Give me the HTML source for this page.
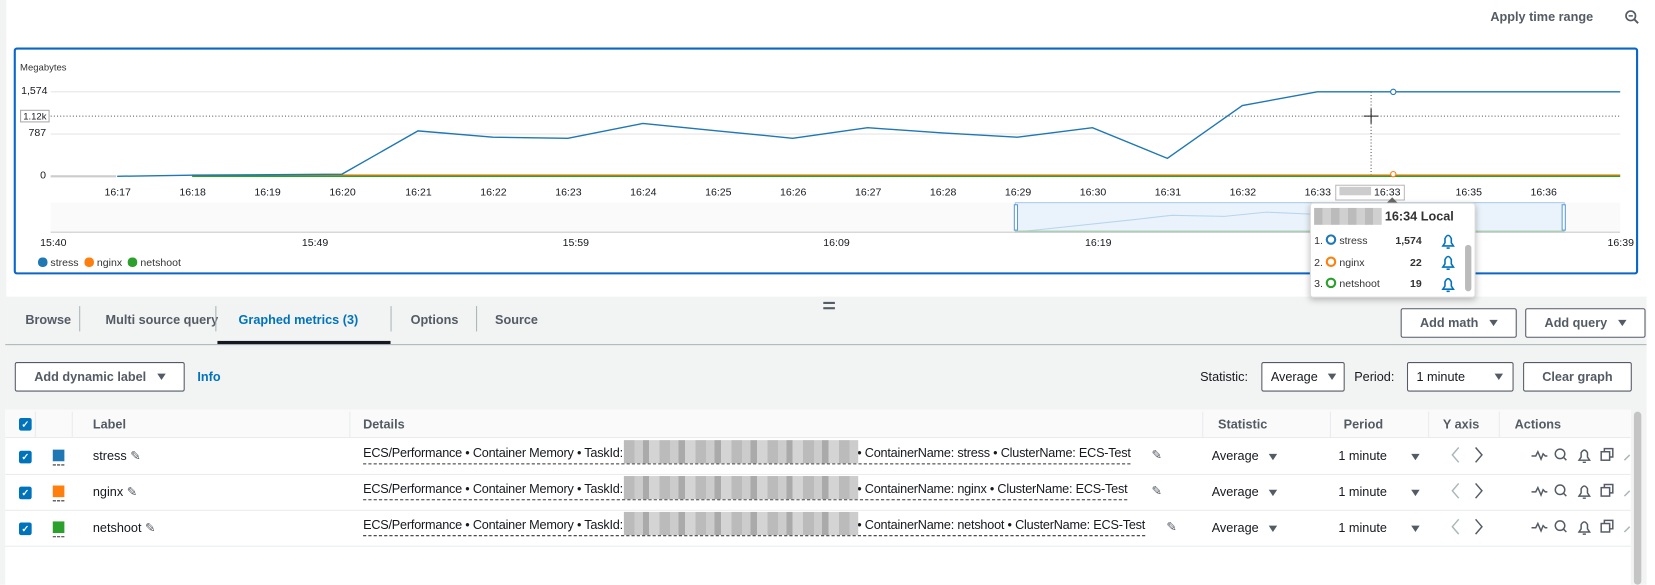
<!DOCTYPE html>
<html><head><meta charset="utf-8"><style>
*{box-sizing:border-box;margin:0;padding:0}
body{width:1655px;height:584px;overflow:hidden;background:#fff;font-family:"Liberation Sans",sans-serif;color:#16191f;font-size:12px}
#w{position:absolute;left:0;top:0;width:1568px;height:554px;transform:scale(1.0555);transform-origin:0 0}
.a{position:absolute;white-space:nowrap}
.b{font-weight:bold}
.btn{position:absolute;border:1px solid #545b64;background:#fff;font-weight:bold;font-size:12px;color:#545b64;display:flex;align-items:center;justify-content:center;border-radius:2px}
.sel{position:absolute;border:1px solid #545b64;background:#fff;font-size:12px;display:flex;align-items:center;padding-left:8px;border-radius:2px}
.tri{display:inline-block;width:0;height:0;border-left:4px solid transparent;border-right:4px solid transparent;border-top:6px solid #545b64;margin-left:10px}
.cb{position:absolute;width:12px;height:12px;background:#0073bb;border-radius:2px;color:#fff;font-size:9px;line-height:12px;text-align:center;font-weight:bold}
.sw{position:absolute;width:11px;height:11px}
.sw:after{content:"";position:absolute;left:0;top:14px;width:11px;border-top:1px dashed #333}
.det{position:absolute;left:344px;font-size:12px;border-bottom:1px dashed #333;height:18px;line-height:15px;letter-spacing:-0.2px}
.blur{position:absolute;left:247px;top:-5px;width:222px;height:22px;background:repeating-linear-gradient(90deg,#bbb 0 10px,#ccc 10px 18px,#aaa 18px 24px,#d4d4d4 24px 34px)}
.sp{display:inline-block;width:222px}
.row{position:absolute;left:5px;width:1540px;height:34px;border-bottom:1px solid #e9ebed}
.vs{position:absolute;width:1px;background:#e9ebed}
</style></head><body><div id="w">
<div class="a" style="left:0;top:0;width:6px;height:554px;background:#f2f3f3"></div>
<div class="a b" style="left:1412px;top:9px;font-size:12px;color:#545b64">Apply time range</div>
<svg class="a" style="left:1539px;top:9px" width="14" height="14" viewBox="0 0 14 14"><circle cx="6" cy="6" r="4.5" fill="none" stroke="#545b64" stroke-width="1.6"/><line x1="9.3" y1="9.3" x2="13" y2="13" stroke="#545b64" stroke-width="1.8"/><line x1="4" y1="6" x2="8" y2="6" stroke="#545b64" stroke-width="1.4"/></svg>
<div class="a" style="left:13px;top:45px;width:1539px;height:215px;border:2px solid #0a66c8;border-radius:3px"></div>
<div class="a" style="left:19px;top:59px;font-size:9px;color:#333">Megabytes</div>
<div class="a" style="left:20px;top:81px;font-size:10px">1,574</div>
<div class="a" style="left:19px;top:104px;font-size:9px;border:1px solid #aaa;padding:0 2px;background:#fff">1.12k</div>
<div class="a" style="left:27px;top:121px;font-size:10px">787</div>
<div class="a" style="left:38px;top:161px;font-size:10px">0</div>
<svg class="a" style="left:0;top:0" width="1560" height="280">
<line x1="48" y1="87" x2="1535" y2="87" stroke="#e6e6e6"/>
<line x1="48" y1="127" x2="1535" y2="127" stroke="#e6e6e6"/>
<line x1="48" y1="110" x2="1535" y2="110" stroke="#555" stroke-dasharray="1,2"/>
<line x1="1299" y1="87" x2="1299" y2="167" stroke="#555" stroke-dasharray="1,2"/>
<line x1="1292" y1="110" x2="1306" y2="110" stroke="#222"/><line x1="1299" y1="103" x2="1299" y2="117" stroke="#222"/>
<line x1="48" y1="167" x2="110" y2="167" stroke="#ccc" stroke-width="2"/>
<line x1="182" y1="166" x2="1535" y2="166" stroke="#ff7f0e" stroke-width="1.5"/>
<line x1="182" y1="167" x2="1535" y2="167" stroke="#2ca02c" stroke-width="1.5"/>
<polyline fill="none" stroke="#1f77b4" stroke-width="1.3" points="111,167 182,166 324,165 396,124 467,130 538,131 609,117 680,124 751,131 822,121 893,126 964,130 1035,121 1106,150 1177,100 1248,87 1535,87"/>
<circle cx="1320" cy="87" r="2.5" fill="#fff" stroke="#1f77b4"/>
<circle cx="1320" cy="165" r="2.5" fill="#fff" stroke="#ff7f0e"/>
<rect x="48" y="192" width="1487" height="28" fill="#fafafa"/>
<rect x="962" y="192" width="520" height="28" fill="#eaf3fb" stroke="#a9c9ea"/>
<rect x="961" y="194" width="3" height="24" fill="#fff" stroke="#5b9bd5"/><rect x="1480" y="194" width="3" height="24" fill="#fff" stroke="#5b9bd5"/>
<polyline fill="none" stroke="#b8d4ee" points="962,220 1075,208 1110,204 1160,205 1200,201 1245,203"/>
<line x1="962" y1="219" x2="1482" y2="219" stroke="#9c9" />
<line x1="48" y1="220" x2="1535" y2="220" stroke="#ccc"/>
</svg>
<div class="a" style="left:0;top:177px;width:1560px;font-size:10px">
<span class="a" style="left:99px">16:17</span><span class="a" style="left:170px">16:18</span><span class="a" style="left:241px">16:19</span><span class="a" style="left:312px">16:20</span><span class="a" style="left:384px">16:21</span><span class="a" style="left:455px">16:22</span><span class="a" style="left:526px">16:23</span><span class="a" style="left:597px">16:24</span><span class="a" style="left:668px">16:25</span><span class="a" style="left:739px">16:26</span><span class="a" style="left:810px">16:27</span><span class="a" style="left:881px">16:28</span><span class="a" style="left:952px">16:29</span><span class="a" style="left:1023px">16:30</span><span class="a" style="left:1094px">16:31</span><span class="a" style="left:1165px">16:32</span><span class="a" style="left:1236px">16:33</span>
<span class="a" style="left:1265px;top:-2px;border:1px solid #bbb;padding:1px 3px;background:#fff"><span style="display:inline-block;width:30px;height:8px;background:#ccc"></span> 16:33</span>
<span class="a" style="left:1379px">16:35</span><span class="a" style="left:1450px">16:36</span>
</div>
<div class="a" style="left:0;top:225px;width:1560px;font-size:10px">
<span class="a" style="left:38px">15:40</span><span class="a" style="left:286px">15:49</span><span class="a" style="left:533px">15:59</span><span class="a" style="left:780px">16:09</span><span class="a" style="left:1028px">16:19</span><span class="a" style="left:1523px">16:39</span>
</div>
<div class="a" style="left:36px;top:244px;font-size:10px;color:#333">
<span style="display:inline-block;width:9px;height:9px;border-radius:4px;background:#1f77b4;vertical-align:-1px"></span> stress&nbsp;&nbsp;<span style="display:inline-block;width:9px;height:9px;border-radius:4px;background:#ff7f0e;vertical-align:-1px"></span> nginx&nbsp;&nbsp;<span style="display:inline-block;width:9px;height:9px;border-radius:4px;background:#2ca02c;vertical-align:-1px"></span> netshoot</div>
<div class="a" style="left:6px;top:281px;width:1554px;height:273px;background:#f2f3f3"></div>
<div class="a" style="left:5px;top:326px;width:1555px;height:1px;background:#aab7b8"></div>
<div class="a b" style="left:24px;top:296px;color:#545b64">Browse</div>
<div class="a" style="left:75px;top:290px;width:1px;height:24px;background:#aab7b8"></div>
<div class="a b" style="left:100px;top:296px;color:#545b64">Multi source query</div>
<div class="a" style="left:204px;top:290px;width:1px;height:24px;background:#aab7b8"></div>
<div class="a b" style="left:226px;top:296px;color:#0073bb">Graphed metrics (3)</div>
<div class="a" style="left:206px;top:323px;width:164px;height:3px;background:#16191f"></div>
<div class="a" style="left:370px;top:290px;width:1px;height:24px;background:#aab7b8"></div>
<div class="a b" style="left:389px;top:296px;color:#545b64">Options</div>
<div class="a" style="left:451px;top:290px;width:1px;height:24px;background:#aab7b8"></div>
<div class="a b" style="left:469px;top:296px;color:#545b64">Source</div>
<div class="a" style="left:780px;top:286px;width:11px;height:2px;background:#545b64"></div>
<div class="a" style="left:780px;top:291px;width:11px;height:2px;background:#545b64"></div>
<div class="btn" style="left:1327px;top:292px;width:110px;height:28px">Add math<span class="tri"></span></div>
<div class="btn" style="left:1445px;top:292px;width:114px;height:28px">Add query<span class="tri"></span></div>
<div class="btn" style="left:14px;top:343px;width:161px;height:28px">Add dynamic label<span class="tri"></span></div>
<div class="a b" style="left:187px;top:350px;color:#0073bb">Info</div>
<div class="a" style="left:1137px;top:350px">Statistic:</div>
<div class="sel" style="left:1195px;top:343px;width:79px;height:28px">Average<span class="tri"></span></div>
<div class="a" style="left:1283px;top:350px">Period:</div>
<div class="sel" style="left:1333px;top:343px;width:101px;height:28px">1 minute<span class="tri" style="margin-left:28px"></span></div>
<div class="btn" style="left:1443px;top:343px;width:103px;height:28px">Clear graph</div>
<div class="a" style="left:5px;top:388px;width:1540px;height:166px;background:#fff"></div>
<div class="a" style="left:5px;top:388px;width:1540px;height:27px;background:#fafafa;border-bottom:1px solid #e9ebed"></div>
<div class="a" style="left:1548px;top:390px;width:7px;height:164px;background:#c4c4c4;border-radius:4px"></div>
<div class="vs" style="left:33px;top:390px;height:24px"></div>
<div class="vs" style="left:68px;top:390px;height:24px"></div>
<div class="vs" style="left:331px;top:390px;height:24px"></div>
<div class="vs" style="left:1139px;top:390px;height:24px"></div>
<div class="vs" style="left:1260px;top:390px;height:24px"></div>
<div class="vs" style="left:1353px;top:390px;height:24px"></div>
<div class="vs" style="left:1420px;top:390px;height:24px"></div>
<div class="cb" style="left:18px;top:396px">✓</div>
<div class="a b" style="left:88px;top:395px;color:#545b64">Label</div>
<div class="a b" style="left:344px;top:395px;color:#545b64">Details</div>
<div class="a b" style="left:1154px;top:395px;color:#545b64">Statistic</div>
<div class="a b" style="left:1273px;top:395px;color:#545b64">Period</div>
<div class="a b" style="left:1367px;top:395px;color:#545b64">Y axis</div>
<div class="a b" style="left:1435px;top:395px;color:#545b64">Actions</div>
<div class="row" style="top:416px"></div>
<div class="row" style="top:450px"></div>
<div class="row" style="top:484px"></div>
<div class="cb" style="left:18px;top:427px">✓</div><div class="sw" style="left:50px;top:426px;background:#1f77b4"></div>
<div class="a" style="left:88px;top:425px">stress <span style="color:#545b64">✎</span></div>
<div class="det" style="top:422px">ECS/Performance • Container Memory • TaskId:<span class="sp"></span>• ContainerName: stress • ClusterName: ECS-Test<span class="blur"></span></div><div class="a" style="left:1091px;top:424px;color:#545b64">✎</div>
<div class="cb" style="left:18px;top:461px">✓</div><div class="sw" style="left:50px;top:460px;background:#ff7f0e"></div>
<div class="a" style="left:88px;top:459px">nginx <span style="color:#545b64">✎</span></div>
<div class="det" style="top:456px">ECS/Performance • Container Memory • TaskId:<span class="sp"></span>• ContainerName: nginx • ClusterName: ECS-Test<span class="blur"></span></div><div class="a" style="left:1091px;top:458px;color:#545b64">✎</div>
<div class="cb" style="left:18px;top:495px">✓</div><div class="sw" style="left:50px;top:494px;background:#2ca02c"></div>
<div class="a" style="left:88px;top:493px">netshoot <span style="color:#545b64">✎</span></div>
<div class="det" style="top:490px">ECS/Performance • Container Memory • TaskId:<span class="sp"></span>• ContainerName: netshoot • ClusterName: ECS-Test<span class="blur"></span></div><div class="a" style="left:1105px;top:492px;color:#545b64">✎</div>
<div class="a" style="left:1148px;top:425px">Average <span class="tri" style="margin-left:6px"></span></div>
<div class="a" style="left:1148px;top:459px">Average <span class="tri" style="margin-left:6px"></span></div>
<div class="a" style="left:1148px;top:493px">Average <span class="tri" style="margin-left:6px"></span></div>
<div class="a" style="left:1268px;top:425px">1 minute <span class="tri" style="margin-left:20px"></span></div>
<div class="a" style="left:1268px;top:459px">1 minute <span class="tri" style="margin-left:20px"></span></div>
<div class="a" style="left:1268px;top:493px">1 minute <span class="tri" style="margin-left:20px"></span></div>
<svg class="a" style="left:1370px;top:416px" width="175" height="102">
<g id="r" fill="none" stroke-width="1.4">
<polyline points="12,8 6,15 12,22" stroke="#aab7b8"/><polyline points="28,8 34,15 28,22" stroke="#545b64"/>
<polyline points="81,16 85,16 87,12 90,19 92,14 94,16 96,16" stroke="#545b64"/>
<circle cx="108" cy="14" r="4.5" stroke="#545b64"/><line x1="111" y1="17" x2="114" y2="20" stroke="#545b64"/>
<path d="M126 20 L128 17 L128 13 Q131 8 134 13 L134 17 L136 20 Z M129.5 22 L132.5 22" stroke="#545b64"/>
<rect x="147" y="12" width="8" height="8" stroke="#545b64"/><polyline points="150,12 150,9 158,9 158,17 155,17" stroke="#545b64"/>
<line x1="169" y1="20" x2="174" y2="15" stroke="#aab7b8"/>
</g>
<use href="#r" y="34"/><use href="#r" y="68"/>
</svg>
<div class="a" style="left:1241px;top:192px;width:157px;height:90px;background:#fff;border:1px solid #ddd;border-radius:3px;box-shadow:0 2px 6px rgba(0,0,0,.25)"></div>
<div class="a" style="left:1314px;top:187px;width:0;height:0;border-left:5px solid transparent;border-right:5px solid transparent;border-bottom:5px solid #666"></div>
<div class="a" style="left:1245px;top:197px;width:64px;height:16px;background:repeating-linear-gradient(90deg,#bbb 0 8px,#d0d0d0 8px 16px)"></div>
<div class="a b" style="left:1312px;top:198px;font-size:12px;color:#333">16:34 Local</div>
<div class="a" style="left:1388px;top:232px;width:6px;height:44px;background:#bbb;border-radius:3px"></div>
<div class="a" style="left:1245px;top:219px;font-size:10px;color:#333;line-height:20.5px">
1. <span style="display:inline-block;width:10px;height:10px;border:2px solid #1f77b4;border-radius:50%;vertical-align:-1px"></span> stress<br>
2. <span style="display:inline-block;width:10px;height:10px;border:2px solid #ff7f0e;border-radius:50%;vertical-align:-1px"></span> nginx<br>
3. <span style="display:inline-block;width:10px;height:10px;border:2px solid #2ca02c;border-radius:50%;vertical-align:-1px"></span> netshoot</div>
<div class="a b" style="left:1321px;top:219px;font-size:10px;color:#333;line-height:20.5px;text-align:right;width:26px">1,574<br>22<br>19</div>
<svg class="a" style="left:1364px;top:219px" width="16" height="60"><g id="bl" fill="none" stroke="#0073bb" stroke-width="1.5"><path d="M3 14 L5 11 L5 7 Q8 1 11 7 L11 11 L13 14 Z M6.5 16 L9.5 16"/></g><use href="#bl" y="20"/><use href="#bl" y="41"/></svg>
</div></body></html>
